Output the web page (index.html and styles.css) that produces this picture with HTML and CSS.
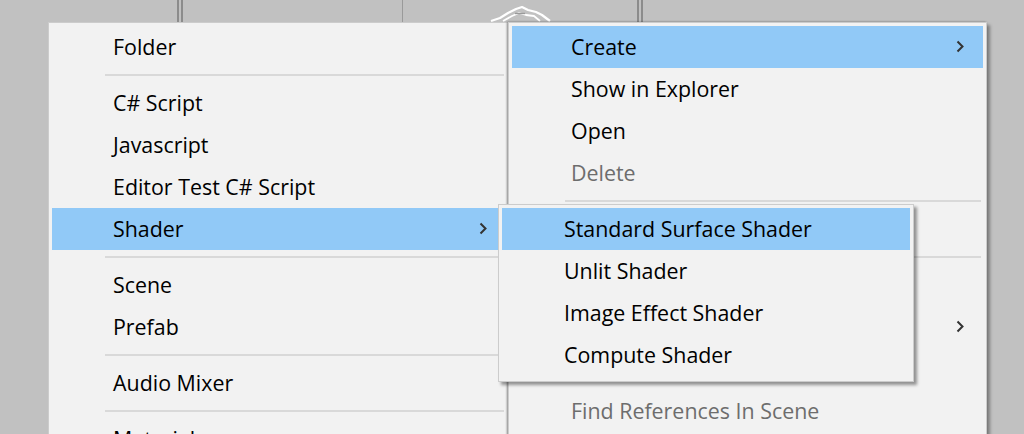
FILE: index.html
```html
<!DOCTYPE html>
<html lang="en">
<head>
<meta charset="utf-8">
<title>Context menu</title>
<link rel="stylesheet" href="styles.css">
</head>
<body>
<div class="desk">
  <svg class="logo" width="66" height="22" viewBox="0 0 66 22">
    <path d="M3 20 L12 17 L20 12 L28 8 L34 6 L40 9 L48 11 L54 14 L62 20" fill="none" stroke="#ffffff" stroke-width="2.2" stroke-linejoin="round"/>
    <path d="M15 20 L24 15 L31 12 L38 14 L46 15 L52 20" fill="none" stroke="#ffffff" stroke-width="1.8" stroke-linejoin="round"/>
    <path d="M27 12.5 L37 12.5" fill="none" stroke="#9a9a9a" stroke-width="1.4"/>
  </svg>

  <div class="menu menu-create">
    <div class="item">Folder</div>
    <div class="sep"></div>
    <div class="item">C# Script</div>
    <div class="item">Javascript</div>
    <div class="item">Editor Test C# Script</div>
    <div class="item active">Shader<svg class="chev" width="9" height="13" viewBox="0 0 9 13"><path d="M1.5 1.5 L6.5 6.5 L1.5 11.5" fill="none" stroke="#333" stroke-width="2"/></svg></div>
    <div class="sep"></div>
    <div class="item">Scene</div>
    <div class="item">Prefab</div>
    <div class="sep"></div>
    <div class="item">Audio Mixer</div>
    <div class="sep"></div>
    <div class="item">Material</div>
  </div>

  <div class="menu menu-main">
    <div class="item active">Create<svg class="chev" width="9" height="13" viewBox="0 0 9 13"><path d="M1.5 1.5 L6.5 6.5 L1.5 11.5" fill="none" stroke="#333" stroke-width="2"/></svg></div>
    <div class="item">Show in Explorer</div>
    <div class="item">Open</div>
    <div class="item disabled">Delete</div>
    <div class="sep"></div>
    <div class="item"></div>
    <div class="sep"></div>
    <div class="item"></div>
    <div class="item"><svg class="chev" width="9" height="13" viewBox="0 0 9 13"><path d="M1.5 1.5 L6.5 6.5 L1.5 11.5" fill="none" stroke="#333" stroke-width="2"/></svg></div>
    <div class="item"></div>
    <div class="item disabled">Find References In Scene</div>
  </div>

  <div class="menu menu-shader">
    <div class="item active">Standard Surface Shader</div>
    <div class="item">Unlit Shader</div>
    <div class="item">Image Effect Shader</div>
    <div class="item">Compute Shader</div>
  </div>
</div>
</body>
</html>
```

FILE: styles.css
```css
html, body {
  margin: 0;
  padding: 0;
}

body {
  width: 1024px;
  height: 434px;
  overflow: hidden;
  background: #c1c1c1;
  font-family: "Open Sans", "Noto Sans", "DejaVu Sans", sans-serif;
}

.desk {
  position: relative;
  width: 1024px;
  height: 434px;
  overflow: hidden;
  background:
    linear-gradient(#8c8c8c, #8c8c8c) 177px 0 / 2px 22px no-repeat,
    linear-gradient(#8c8c8c, #8c8c8c) 181px 0 / 2px 22px no-repeat,
    linear-gradient(#9a9a9a, #9a9a9a) 402px 0 / 1px 22px no-repeat,
    linear-gradient(#8c8c8c, #8c8c8c) 637px 0 / 2px 22px no-repeat,
    linear-gradient(#8c8c8c, #8c8c8c) 641px 0 / 2px 22px no-repeat,
    #c1c1c1;
}

.logo {
  position: absolute;
  left: 488px;
  top: 1px;
}

.menu {
  position: absolute;
  box-sizing: border-box;
  display: flex;
  flex-direction: column;
  background: #f2f2f2;
  border: 1px solid #cccccc;
  padding: 3px;
  --indent: 61px;
}

.menu-create {
  left: 48px;
  top: 22px;
  width: 462px;
  height: 460px;
  --indent: 61px;
}

.menu-main {
  left: 508px;
  top: 22px;
  width: 479px;
  height: 460px;
  --indent: 59px;
  box-shadow: -1px 0 2px rgba(0, 0, 0, 0.45), 3px 3px 3px rgba(0, 0, 0, 0.35);
}

.menu-shader {
  left: 498px;
  top: 204px;
  width: 416px;
  padding-bottom: 5px;
  --indent: 62px;
  box-shadow: 3px 3px 3px rgba(0, 0, 0, 0.4);
}

.item {
  height: 42px;
  flex: none;
  display: flex;
  align-items: center;
  padding-left: var(--indent);
  padding-right: 18px;
  font-size: 21.4px;
  line-height: 28px;
  color: #000000;
  white-space: nowrap;
}

.item.active {
  background: #91c9f7;
}

.item.disabled {
  color: #6d6d6d;
}

.chev {
  margin-left: auto;
  margin-top: -1px;
}

.sep {
  flex: none;
  height: 2px;
  margin: 6px 2px 6px 53px;
  background: #d9d9d9;
}
```
